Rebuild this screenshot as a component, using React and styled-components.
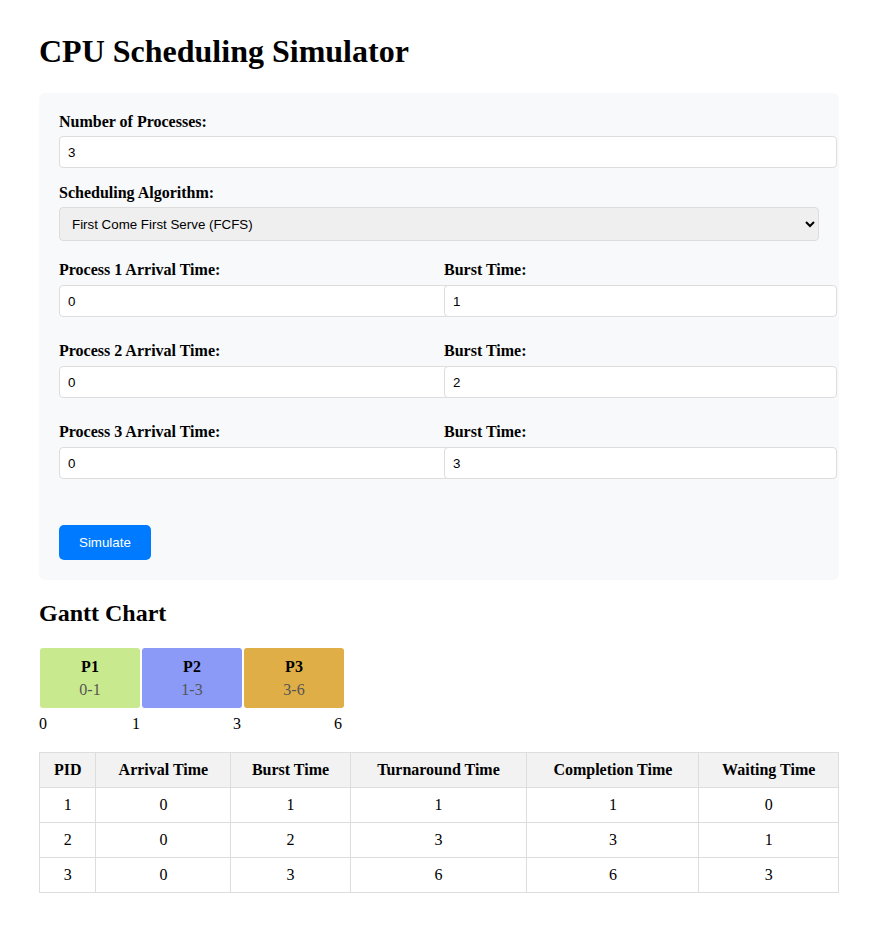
import React from "react";
import styled, { createGlobalStyle } from "styled-components";

const GlobalStyle = createGlobalStyle`
  body {
    margin: 0;
    font-family: "Liberation Serif", "Times New Roman", serif;
    color: #000;
    background: #fff;
  }
`;

const processes = [
  { pid: 1, arrival: 0, burst: 1, turnaround: 1, completion: 1, waiting: 0 },
  { pid: 2, arrival: 0, burst: 2, turnaround: 3, completion: 3, waiting: 1 },
  { pid: 3, arrival: 0, burst: 3, turnaround: 6, completion: 6, waiting: 3 },
];

const gantt = [
  { pid: "P1", start: 0, end: 1, color: "#c9e98e" },
  { pid: "P2", start: 1, end: 3, color: "#8b9af6" },
  { pid: "P3", start: 3, end: 6, color: "#dfae47" },
];

const App = () => {
  return (
    <Page>
      <GlobalStyle />
      <Title>CPU Scheduling Simulator</Title>

      <Panel>
        <Group>
          <Label>Number of Processes:</Label>
          <Input type="number" defaultValue="3" />
        </Group>
        <Group $mb={20}>
          <Label>Scheduling Algorithm:</Label>
          <Select defaultValue="fcfs">
            <option value="fcfs">First Come First Serve (FCFS)</option>
            <option value="sjf">Shortest Job First (SJF)</option>
            <option value="rr">Round Robin (RR)</option>
          </Select>
        </Group>

        {processes.map((p) => (
          <ProcessRow key={p.pid}>
            <Column>
              <Label $mb={6}>Process {p.pid} Arrival Time:</Label>
              <Input type="number" defaultValue={p.arrival} />
            </Column>
            <Column>
              <Label $mb={6}>Burst Time:</Label>
              <Input type="number" defaultValue={p.burst} />
            </Column>
          </ProcessRow>
        ))}

        <SimulateButton>Simulate</SimulateButton>
      </Panel>

      <SubTitle>Gantt Chart</SubTitle>
      <Chart>
        {gantt.map((g) => (
          <Block key={g.pid} $color={g.color}>
            <strong>{g.pid}</strong>
            <Range>
              {g.start}-{g.end}
            </Range>
          </Block>
        ))}
      </Chart>
      <TimeRow>
        <StartTick>0</StartTick>
        {gantt.map((g) => (
          <Tick key={g.pid}>{g.end}</Tick>
        ))}
      </TimeRow>

      <Table>
        <thead>
          <tr>
            <th>PID</th>
            <th>Arrival Time</th>
            <th>Burst Time</th>
            <th>Turnaround Time</th>
            <th>Completion Time</th>
            <th>Waiting Time</th>
          </tr>
        </thead>
        <tbody>
          {processes.map((p) => (
            <tr key={p.pid}>
              <td>{p.pid}</td>
              <td>{p.arrival}</td>
              <td>{p.burst}</td>
              <td>{p.turnaround}</td>
              <td>{p.completion}</td>
              <td>{p.waiting}</td>
            </tr>
          ))}
        </tbody>
      </Table>
    </Page>
  );
};

const Page = styled.div`
  width: 800px;
  padding: 12px 39px 30px;
`;

const Title = styled.h1`
  font-size: 32px;
  margin: 21px 0 23px;
`;

const Panel = styled.div`
  background: #f8f9fa;
  border-radius: 6px;
  padding: 20px;
`;

const Group = styled.div`
  margin-bottom: ${(p) => p.$mb || 16}px;
`;

const Label = styled.label`
  display: block;
  font-weight: bold;
  font-size: 16px;
  margin-bottom: ${(p) => p.$mb || 5}px;
`;

const Input = styled.input`
  width: 100%;
  height: 14px;
  padding: 8px;
  font-family: "Liberation Sans", Arial, sans-serif;
  font-size: 13.33px;
  border: 1px solid #ddd;
  border-radius: 4px;
  background: #fff;
  position: relative;
  &::-webkit-inner-spin-button,
  &::-webkit-outer-spin-button {
    -webkit-appearance: none;
    margin: 0;
  }
`;

const Select = styled.select`
  display: block;
  width: 100%;
  height: 34px;
  padding: 0 8px;
  font-family: "Liberation Sans", Arial, sans-serif;
  font-size: 13.33px;
  color: #000;
  border: 1px solid #ddd;
  border-radius: 4px;
  background-color: #efefef;
`;

const ProcessRow = styled.div`
  display: flex;
  gap: 10px;
  margin-bottom: 25px;
`;

const Column = styled.div`
  flex: 1;
`;

const SimulateButton = styled.button`
  margin-top: 21px;
  padding: 0 20px;
  height: 35px;
  background: #007bff;
  color: #fff;
  border: none;
  border-radius: 5px;
  font-family: "Liberation Sans", Arial, sans-serif;
  font-size: 13.33px;
  cursor: pointer;
`;

const SubTitle = styled.h2`
  font-size: 24px;
  margin: 20px 0 21px;
`;

const Chart = styled.div`
  display: flex;
`;

const Block = styled.div`
  width: 100px;
  height: 60px;
  margin: 0 1px;
  box-sizing: border-box;
  padding-top: 10px;
  border-radius: 3px;
  background: ${(p) => p.$color};
  display: flex;
  flex-direction: column;
  align-items: center;
  gap: 5px;
  font-size: 16px;
`;

const Range = styled.span`
  color: #555;
  font-size: 16px;
`;

const TimeRow = styled.div`
  display: flex;
  margin-top: 7px;
  font-size: 16px;
`;

const StartTick = styled.span`
  width: 0;
  white-space: nowrap;
`;

const Tick = styled.span`
  width: 101px;
  text-align: right;
`;

const Table = styled.table`
  width: 100%;
  margin-top: 19px;
  border-collapse: collapse;
  font-size: 16px;
  th,
  td {
    border: 1px solid #ddd;
    padding: 8px;
    text-align: center;
  }
  th {
    background: #f2f2f2;
  }
`;

export default App;
